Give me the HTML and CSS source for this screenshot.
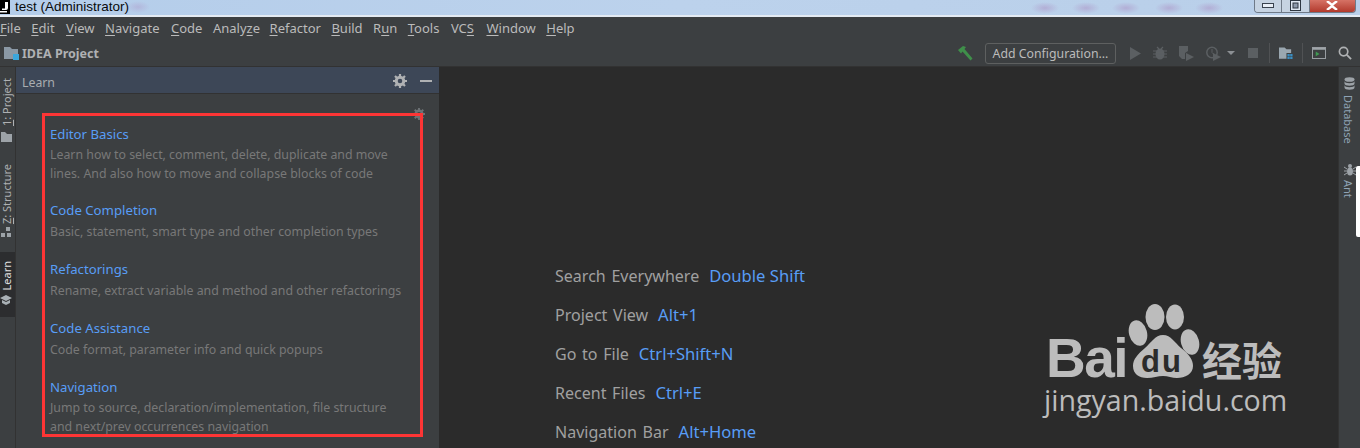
FILE: index.html
```html
<!DOCTYPE html>
<html lang="en">
<head>
<meta charset="utf-8">
<title>test (Administrator)</title>
<link rel="stylesheet" href="styles.css">
</head>
<body>
<div class="app">
  <header class="titlebar">
    <svg class="java-logo" width="10" height="14" viewBox="0 0 10 14"><rect width="10" height="14" fill="#000"/><rect x="0" y="11" width="7" height="1.500" fill="#fff"/><path d="M5 2h3v6q0 2-2 2H2V8.500h3z" fill="#fff"/></svg>
    <span class="title-text">test (Administrator)</span>
    <div class="winctl">
      <span class="wbtn"><svg width="12" height="6" viewBox="0 0 12 6"><rect x=".5" y=".5" width="11" height="4" fill="#e8eef6" stroke="#39424e"/></svg></span>
      <span class="wbtn"><svg width="11" height="11" viewBox="0 0 11 11"><rect x=".5" y=".5" width="10" height="10" fill="#dfe7f2" stroke="#2e3742"/><rect x="3" y="3" width="5" height="5" fill="#8d99ab" stroke="#2e3742"/></svg></span>
      <span class="wbtn close"><svg width="12" height="9" viewBox="0 0 12 9"><path d="M1 0l5 4 5-4M1 9l5-4 5 4" stroke="#fff" stroke-width="2.400" fill="none"/></svg></span>
    </div>
  </header>

  <nav class="menubar">
    <span class="menu"><u>F</u>ile</span><span class="menu"><u>E</u>dit</span><span class="menu nudge"><u>V</u>iew</span><span class="menu"><u>N</u>avigate</span><span class="menu nudge"><u>C</u>ode</span><span class="menu">Analy<u>z</u>e</span><span class="menu pull"><u>R</u>efactor</span><span class="menu"><u>B</u>uild</span><span class="menu">R<u>u</u>n</span><span class="menu tools-menu"><u>T</u>ools</span><span class="menu vcs">VC<u>S</u></span><span class="menu"><u>W</u>indow</span><span class="menu"><u>H</u>elp</span>
  </nav>

  <div class="navbar">
    <div class="crumb">
      <svg class="crumb-icon" width="16" height="15" viewBox="0 0 16 15"><path d="M0 1h6l2 2h6v10H0z" fill="#8a98a5"/><rect x="9" y="8" width="6" height="6" fill="#3aa6dc"/></svg>
      <span>IDEA Project</span>
    </div>
    <div class="tools">
      <svg class="ti hammer" width="15" height="15" viewBox="0 0 15 15"><path d="M0 4l5-4 3 1-1.500 2 8 9.500-2 2L4.500 5.500 3 7.500z" fill="#3f8f4a"/></svg>
      <span class="config">Add Configuration...</span>
      <svg class="ti run" width="11" height="13" viewBox="0 0 11 13"><path d="M0 0l11 6.500L0 13z" fill="#5b5f62"/></svg>
      <svg class="ti debug" width="14" height="14" viewBox="0 0 14 14"><ellipse cx="7" cy="8" rx="4.500" ry="5.500" fill="#5b5f62"/><path d="M0 5h14M0 8h14M0 11h14M4 1l2 2M10 1L8 3" stroke="#5b5f62" stroke-width="1.200"/></svg>
      <svg class="ti cover" width="15" height="15" viewBox="0 0 15 15"><path d="M0 0h9v5L6 7v6H3l-3-3z" fill="#5b5f62"/><path d="M7 7l8 4-8 4z" fill="#5b5f62"/></svg>
      <svg class="ti profile" width="15" height="15" viewBox="0 0 15 15"><circle cx="6" cy="6.500" r="5.200" fill="none" stroke="#5b5f62" stroke-width="1.500"/><path d="M6 3v3.500l2 2" stroke="#5b5f62" fill="none"/><path d="M7 7l8 4-8 4z" fill="#5b5f62"/></svg>
      <svg class="ti caret" width="8" height="4" viewBox="0 0 8 4"><path d="M0 0h8L4 4z" fill="#8c9094"/></svg>
      <svg class="ti stop" width="10" height="10" viewBox="0 0 10 10"><rect width="10" height="10" fill="#5b5f62"/></svg>
      <span class="vsep"></span>
      <svg class="ti struct" width="14" height="13" viewBox="0 0 15 13"><path d="M0 0h6l2 2h5v4H8v6H0z" fill="#9aa7b0"/><path d="M9 7h2.500v2.500H9zM12 7h2.500v2.500H12zM9 10h2.500v2.500H9zM12 10h2.500v2.500H12z" fill="#3a8fc4"/></svg>
      <span class="vsep"></span>
      <svg class="ti terminal" width="14" height="12" viewBox="0 0 15 13"><rect x=".5" y=".5" width="14" height="12" fill="none" stroke="#a0a6aa"/><rect x="1" y="1" width="13" height="2" fill="#a0a6aa"/><path d="M4 5l4 2.500-4 2.500z" fill="#3f9a52"/></svg>
      <svg class="ti search" width="14" height="14" viewBox="0 0 15 15"><circle cx="6" cy="6" r="4.500" fill="none" stroke="#afb1b3" stroke-width="1.800"/><path d="M9.500 9.500L14 14" stroke="#afb1b3" stroke-width="2"/></svg>
    </div>
  </div>

  <main class="workspace">
    <aside class="stripe left">
      <div class="stripe-btn project"><span class="vtext"><u>1</u>: Project</span><svg width="11" height="10" viewBox="0 0 11 10"><path d="M0 0h4l2 2h5v8H0z" fill="#9da3a8"/></svg></div>
      <div class="stripe-btn structure"><span class="vtext"><u>Z</u>: Structure</span><svg width="11" height="10" viewBox="0 0 11 10"><path d="M5 0h4v4H5zM0 6h4v4H0zM6 6h4v4H6z" fill="#9da3a8"/></svg></div>
      <div class="stripe-btn learn"><span class="vtext">Learn</span><svg width="12" height="10" viewBox="0 0 12 10"><path d="M6 0l6 3-6 3-6-3zM2 5l4 2 4-2v3l-4 2-4-2z" fill="#a9b0b5"/></svg></div>
    </aside>

    <section class="learn-panel">
      <div class="panel-head">
        <span class="head-title">Learn</span>
        <div class="head-icons">
          <svg width="14" height="14" viewBox="0 0 14 14"><circle cx="7" cy="7" r="3.800" fill="none" stroke="#afb1b3" stroke-width="3"/><path d="M7 0v3M7 11v3M0 7h3M11 7h3M2 2l2 2M10 10l2 2M2 12l2-2M10 4l2-2" stroke="#afb1b3" stroke-width="2.200"/></svg>
          <span class="dash"></span>
        </div>
      </div>
      <div class="lessons">
        <article class="lesson two"><h3>Editor Basics</h3><p>Learn how to select, comment, delete, duplicate and move<br>lines. And also how to move and collapse blocks of code</p></article>
        <article class="lesson"><h3>Code Completion</h3><p>Basic, statement, smart type and other completion types</p></article>
        <article class="lesson"><h3>Refactorings</h3><p>Rename, extract variable and method and other refactorings</p></article>
        <article class="lesson"><h3>Code Assistance</h3><p>Code format, parameter info and quick popups</p></article>
        <article class="lesson two"><h3>Navigation</h3><p>Jump to source, declaration/implementation, file structure<br>and next/prev occurrences navigation</p></article>
      </div>
      <svg class="panel-gear" width="12" height="12" viewBox="0 0 14 14"><circle cx="7" cy="7" r="3.800" fill="none" stroke="#6e7376" stroke-width="3"/><path d="M7 0v3M7 11v3M0 7h3M11 7h3M2 2l2 2M10 10l2 2M2 12l2-2M10 4l2-2" stroke="#6e7376" stroke-width="2.200"/></svg>
      <div class="red-box"></div>
    </section>

    <section class="editor">
      <div class="hints">
        <div class="hint">Search Everywhere<b>Double Shift</b></div>
        <div class="hint">Project View<b>Alt+1</b></div>
        <div class="hint">Go to File<b>Ctrl+Shift+N</b></div>
        <div class="hint">Recent Files<b>Ctrl+E</b></div>
        <div class="hint">Navigation Bar<b>Alt+Home</b></div>
      </div>
      <div class="watermark">
        <div class="wm-top">
          <span class="wm-bai">Bai</span>
          <span class="wm-du">
            <svg width="72" height="74" viewBox="0 0 72 74"><ellipse cx="27" cy="13" rx="9.500" ry="13" fill="#bcbcbc"/><ellipse cx="47" cy="13" rx="9" ry="12.500" fill="#bcbcbc"/><ellipse cx="10" cy="29" rx="9" ry="13" fill="#bcbcbc" transform="rotate(-15 10 29)"/><ellipse cx="62" cy="38" rx="9" ry="13" fill="#bcbcbc" transform="rotate(-15 62 38)"/><path d="M35 31c8 0 12 8 18 13 8 6 12 12 12 18 0 8-8 12-16 12-5 0-9-2-14-2s-10 2-16 2c-8 0-14-4-14-12 0-7 5-12 12-18 6-5 10-13 18-13z" fill="#bcbcbc"/></svg>
            <span class="du">du</span>
          </span>
          <span class="wm-cn">经验</span>
        </div>
        <div class="wm-url">jingyan.baidu.com</div>
      </div>
    </section>

    <aside class="stripe right">
      <div class="rbtn"><svg width="11" height="13" viewBox="0 0 11 13"><ellipse cx="5.500" cy="2.500" rx="5" ry="2.300" fill="#9da3a8"/><path d="M.5 4v2.500c0 1.300 2.200 2.300 5 2.300s5-1 5-2.300V4c0 1.300-2.200 2.300-5 2.300S.5 5.300.5 4zM.5 8v2.500c0 1.300 2.200 2.300 5 2.300s5-1 5-2.300V8c0 1.300-2.200 2.300-5 2.300S.5 9.300.5 8z" fill="#9da3a8"/></svg><span class="vtext-r">Database</span></div>
      <div class="rbtn ant"><svg width="12" height="13" viewBox="0 0 12 13"><ellipse cx="6" cy="8.500" rx="3" ry="4" fill="#9da3a8"/><circle cx="6" cy="3" r="2" fill="#9da3a8"/><path d="M0 4l3 2M12 4L9 6M0 8h3M12 8H9M0 12l3-2M12 12L9 10" stroke="#9da3a8"/></svg><span class="vtext-r">Ant</span></div>
      <span class="white-tab"></span>
    </aside>
  </main>
</div>
</body>
</html>
```

FILE: styles.css
```css
* { box-sizing: border-box; }
html, body { margin: 0; padding: 0; height: 448px; overflow: hidden; background: #3c3f41; }
body { font-family: "Noto Sans", "Open Sans", sans-serif; }
.app { width: 1360px; height: 448px; display: flex; flex-direction: column; overflow: hidden; }

.titlebar { height: 17px; flex: none; display: flex; align-items: flex-start; position: relative; border-bottom: 2px solid #e4ebf3;
  background:
    radial-gradient(ellipse 14px 6px at 1045px 8px, rgba(175, 160, 205, .7), transparent),
    radial-gradient(ellipse 14px 6px at 1086px 8px, rgba(175, 160, 205, .7), transparent),
    radial-gradient(ellipse 14px 6px at 1126px 8px, rgba(175, 160, 205, .7), transparent),
    radial-gradient(ellipse 14px 6px at 1169px 8px, rgba(175, 160, 205, .7), transparent),
    radial-gradient(ellipse 14px 6px at 1209px 8px, rgba(175, 160, 205, .7), transparent),
    radial-gradient(ellipse 12px 6px at 138px 7px, rgba(175, 160, 205, .5), transparent),
    linear-gradient(90deg, #b4cdea 0%, #bcd2ec 50%, #b9cfe9 100%); }
.java-logo { flex: none; }
.title-text { margin-left: 5px; font: 13.500px/14px "Liberation Sans", sans-serif; color: #0a0a0a; }
.winctl { position: absolute; right: 4px; top: -1px; display: flex; height: 14px; width: 102px; border: 1px solid #6f7a88; border-top: 0; border-radius: 0 0 4px 4px; overflow: hidden; }
.wbtn { flex: 27 0 0; display: flex; align-items: center; justify-content: center; background: #c6d3e2; border-right: 1px solid #6f7a88; }
.wbtn.close { flex: 46 0 0; background: linear-gradient(#d9776a, #b23a2d); border-right: 0; }

.menubar { height: 22px; flex: none; display: flex; align-items: center; background: #3c3f41; color: #bbbbbb; font-size: 13px; padding-left: 0; gap: 10.500px; }
.menu u { text-underline-offset: 2px; }
.nudge { margin-left: 1px; }
.pull { margin-left: -1px; }
.tools-menu { margin-right: 1px; }
.vcs { margin-right: 2px; }

.navbar { height: 28px; flex: none; display: flex; align-items: center; justify-content: space-between; padding-top: 1px; background: #3c3f41; border-bottom: 1px solid #323232; color: #bbbbbb; }
.crumb { display: flex; align-items: center; font-size: 12.500px; font-weight: 700; color: #afb1b3; padding-left: 4px; gap: 2px; }
.crumb-icon { flex: none; }
.tools { display: flex; align-items: center; padding-right: 8px; height: 100%; }
.ti { flex: none; display: block; }
.hammer { margin-right: 12px; }
.config { height: 21px; width: 131px; border: 1px solid #5e6060; border-radius: 3px; color: #bbbbbb; font-size: 12.300px; line-height: 19px; text-align: center; margin-right: 14px; }
.run { margin-right: 12px; }
.debug { margin-right: 12px; }
.cover { margin-right: 12px; }
.profile { margin-right: 6px; }
.caret { margin-right: 13px; }
.stop { margin-right: 11px; }
.vsep { width: 1px; height: 20px; background: #505254; margin-right: 9px; }
.struct { margin-right: 9px; }
.terminal { margin-right: 12px; }

.workspace { flex: 1; display: flex; min-height: 0; }
.stripe { flex: none; background: #3c3f41; position: relative; }
.stripe.left { width: 16px; display: flex; flex-direction: column; border-right: 1px solid #323232; color: #afb1b3; }
.stripe-btn { width: 15px; display: flex; flex-direction: column; align-items: center; padding-right: 2px; font-size: 11px; flex: none; }
.stripe-btn .vtext { writing-mode: vertical-rl; transform: rotate(180deg); line-height: 13px; white-space: nowrap; }
.stripe-btn svg { flex: none; margin-right: 1px; }
.stripe-btn.project { margin-top: 11px; gap: 6px; }
.stripe-btn.structure { margin-top: 22px; gap: 3px; }
.stripe-btn.learn { height: 65px; margin-top: 15px; padding-top: 9px; gap: 4px; background: #2c2d2f; color: #e0e0e0; }

.learn-panel { width: 423px; flex: none; background: #3c3f41; position: relative; }
.panel-head { height: 27px; background: #3d4757; border-bottom: 1px solid #323232; display: flex; align-items: center; justify-content: space-between; padding: 1px 7px 0 6px; color: #a9adb0; font-size: 12.300px; }
.head-title { padding-top: 3px; }
.head-icons { display: flex; align-items: center; gap: 13px; }
.dash { width: 12px; height: 2px; background: #afb1b3; }
.lessons { padding: 31px 0 0 34px; }
.lesson { margin-bottom: 19px; }
.lesson.two { margin-bottom: 18px; }
.lesson h3 { margin: 0; font-size: 13.200px; line-height: 19px; font-weight: 400; color: #589df6; }
.lesson p { margin: 2px 0 0; font-size: 12.350px; line-height: 19px; color: #787878; white-space: nowrap; }
.lesson.two p { margin-top: 1px; }
.panel-gear { position: absolute; left: 397px; top: 41px; }
.red-box { position: absolute; left: 26px; top: 46px; width: 381px; height: 324px; border: 3px solid #fd3535; }

.editor { flex: 1; min-width: 0; background: #2b2b2b; position: relative; }
.hints { padding: 198px 0 0 116px; }
.hint { height: 39px; font-size: 16.050px; line-height: 22px; word-spacing: 1.500px; color: #a0a0a0; white-space: nowrap; }
.hint b { font-weight: 400; font-size: 16.600px; word-spacing: 0; color: #589df6; margin-left: 10px; }

.watermark { position: absolute; left: 605px; top: 237px; width: 260px; color: #bcbcbc; }
.wm-top { display: flex; align-items: flex-end; height: 74px; margin-left: 2px; }
.wm-bai { font: 700 55px/40px "Liberation Sans", sans-serif; letter-spacing: -1.500px; width: 82px; flex: none; }
.wm-du { position: relative; width: 72px; height: 74px; flex: none; }
.wm-du svg { display: block; }
.du { position: absolute; left: 13px; top: 42px; font: 700 31px/31px "Liberation Sans", sans-serif; letter-spacing: 2px; color: #2b2b2b; }
.wm-cn { font: 700 40px/38px "Noto Sans CJK SC", sans-serif; margin-left: 2px; white-space: nowrap; }
.wm-url { font: 400 28.600px/30px "Open Sans", sans-serif; margin-top: 7px; white-space: nowrap; }

.stripe.right { width: 22px; border-left: 1px solid #323232; color: #8fa3b5; display: flex; flex-direction: column; align-items: center; padding-top: 10px; }
.rbtn { display: flex; flex-direction: column; align-items: center; gap: 5px; }
.rbtn.ant { margin-top: 19px; gap: 4px; }
.vtext-r { writing-mode: vertical-rl; font-size: 11px; line-height: 14px; white-space: nowrap; margin-right: 3px; }
.white-tab { position: absolute; right: 0; top: 99px; width: 4px; height: 71px; background: #fff; border-radius: 2px 0 0 2px; }
```
